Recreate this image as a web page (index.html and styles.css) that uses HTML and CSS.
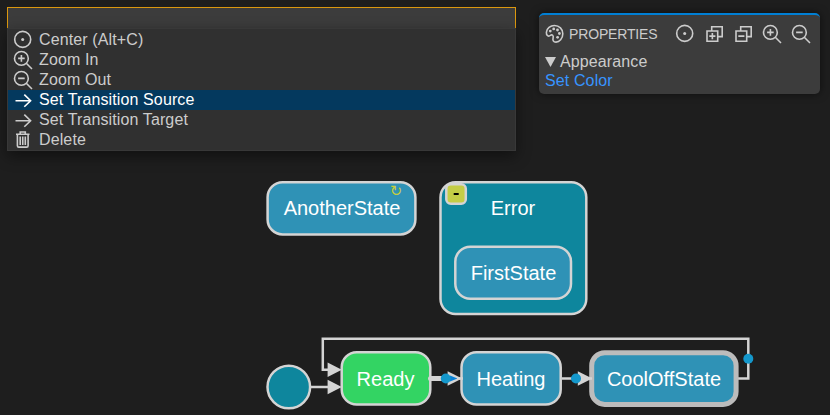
FILE: index.html
```html
<!DOCTYPE html>
<html lang="en">
<head>
<meta charset="utf-8">
<title>State Diagram</title>
<link rel="stylesheet" href="styles.css">
</head>
<body>
<svg class="symbols" aria-hidden="true">
  <symbol id="center" viewBox="0 0 20 20"><circle cx="9.7" cy="9.4" r="8"/><circle class="solid" cx="9.7" cy="9.4" r="1.5"/></symbol>
  <symbol id="zoom-in" viewBox="0 0 20 20"><circle cx="8.4" cy="8.4" r="6.9"/><path d="M13.3 13.3L19 19M5.1 8.4h6.6M8.4 5.1v6.6"/></symbol>
  <symbol id="zoom-out" viewBox="0 0 20 20"><circle cx="8.4" cy="8.4" r="6.9"/><path d="M13.3 13.3L19 19M5.1 8.4h6.6"/></symbol>
  <symbol id="arrow" viewBox="0 0 20 20"><path d="M2.5 10.7h15M11.3 4.6l6.3 6.1-6.3 6.1"/></symbol>
  <symbol id="trash" viewBox="0 0 20 20"><path d="M3 4.3h13.5M7.2 4V2h5.1v2M4.4 4.5v11.2q0 1.4 1.4 1.4h7.9q1.4 0 1.4-1.4V4.5M7.2 6.5v8.5M9.75 6.5v8.5M12.3 6.5v8.5"/></symbol>
  <symbol id="expand" viewBox="0 0 20 20"><path d="M7.7 6.6V2.8h10.5v9.8h-4M3 7h10.7v10.3H3zM5.3 12.1h6.1M8.35 9v6.2"/></symbol>
  <symbol id="collapse" viewBox="0 0 20 20"><path d="M7.7 6.6V2.8h10.5v9.8h-4M3 7h10.7v10.3H3zM5.3 12.1h6.1"/></symbol>
  <symbol id="palette" viewBox="0 0 20 20"><path d="M1.4 8.3C1.7 4.2 5.4 1.5 9.5 1.5c4.8 0 8.300 3.700 8.300 8.200 0 5-3.500 8.400-6.800 8.400-2.700 0-3.500-1.900-2.900-4.100.7-2.500-1-4-2.800-2.500-1.700 1.400-4.200.2-3.900-3.200z"/><circle class="solid" cx="5.300" cy="7.100" r="1.400"/><circle class="solid" cx="8.700" cy="4.900" r="1.400"/><circle class="solid" cx="12.500" cy="6" r="1.400"/><circle class="solid" cx="14.400" cy="9.500" r="1.400"/><circle class="solid" cx="12.600" cy="13.300" r="1.400"/></symbol>
</svg>

<svg class="diagram" width="830" height="415" viewBox="0 0 830 415">
  <rect class="node" x="267.6" y="182.2" width="147.8" height="52.2" rx="15"/>
  <text class="label" x="342" y="215">AnotherState</text>
  <text class="loop" x="396" y="195.5">↻</text>

  <rect class="node parent" x="440.5" y="182.2" width="145.8" height="131.8" rx="15"/>
  <text class="label" x="513" y="215">Error</text>
  <rect class="toggle" x="446.3" y="184.3" width="19.5" height="19.5" rx="4.5"/>
  <path class="minus" d="M453.7 194h5"/>
  <rect class="node" x="455.3" y="246.7" width="115.7" height="52.1" rx="15"/>
  <text class="label" x="513.5" y="280">FirstState</text>

  <path class="edge" d="M736 378.6H748.3V338.8H322.8V369.8H329M311 387H329"/>
  <circle class="node parent" cx="288.8" cy="387" r="21.3"/>
  <rect class="node ready" x="341.7" y="352.3" width="88.6" height="52.2" rx="15"/>
  <text class="label" x="385.5" y="386">Ready</text>
  <path class="head" d="M327.6 362.6v14.4l14.2-7.2zM327.6 379.8v14.4l14.2-7.2z"/>
  <rect class="node" x="461.5" y="352.3" width="99.2" height="52.2" rx="15"/>
  <text class="label" x="511" y="386">Heating</text>
  <rect class="node selected" x="591.7" y="352.7" width="144.4" height="51.7" rx="13"/>
  <text class="label" x="664" y="386">CoolOffState</text>

  <path class="thick" d="M430.5 378.5H446"/>
  <path class="head" d="M447.6 371.3l14.5 7.2-14.5 7.2v-3.3l4-3.9-4-3.9z"/>
  <path class="core" d="M450 375.4l7.5 3.1-7.5 3.1z"/>
  <path class="edge" d="M457 378.5h6"/>
  <path class="edge" d="M562 378.5h10M585 378.5h7"/>
  <path class="head" d="M577.8 371.3l14.5 7.2-14.5 7.2v-3.3l3-3.9-3-3.9z"/>
  <circle class="handle" cx="445.8" cy="378.5" r="5"/>
  <circle class="handle" cx="576" cy="378.5" r="5"/>
  <circle class="handle" cx="748.3" cy="358.7" r="5"/>
</svg>

<main class="overlay">
  <section class="palette">
    <input class="search" type="text" aria-label="Command">
    <div class="menu">
      <div class="item"><svg class="icon"><use href="#center"/></svg>Center (Alt+C)</div>
      <div class="item"><svg class="icon"><use href="#zoom-in"/></svg>Zoom In</div>
      <div class="item"><svg class="icon"><use href="#zoom-out"/></svg>Zoom Out</div>
      <div class="item active"><svg class="icon"><use href="#arrow"/></svg>Set Transition Source</div>
      <div class="item"><svg class="icon"><use href="#arrow"/></svg>Set Transition Target</div>
      <div class="item"><svg class="icon"><use href="#trash"/></svg>Delete</div>
    </div>
  </section>
  <aside class="panel">
    <header class="panel-head">
      <svg class="icon"><use href="#palette"/></svg>
      <span class="title">PROPERTIES</span>
      <div class="tools">
        <svg class="icon"><use href="#center"/></svg>
        <svg class="icon"><use href="#expand"/></svg>
        <svg class="icon"><use href="#collapse"/></svg>
        <svg class="icon"><use href="#zoom-in"/></svg>
        <svg class="icon"><use href="#zoom-out"/></svg>
      </div>
    </header>
    <div class="group"><svg class="caret" viewBox="0 0 11 10"><path d="M0 0h11L5.500 10z"/></svg>Appearance</div>
    <div class="link">Set Color</div>
  </aside>
</main>
</body>
</html>
```
FILE: styles.css
```css
* { box-sizing: border-box; }
body {
  margin: 0;
  width: 830px;
  height: 415px;
  overflow: hidden;
  position: relative;
  background: #1e1e1e;
  color: #ccc;
  font: 16px/20px "Liberation Sans", Arial, sans-serif;
  letter-spacing: .12px;
}
.symbols { position: absolute; width: 0; height: 0; }
.diagram { position: absolute; left: 0; top: 0; letter-spacing: 0; }

.node { fill: #2f92b6; stroke: #d4d4d4; stroke-width: 2.5; }
.parent { fill: #0e869d; }
.ready { fill: #33d463; }
.selected { stroke: #bcbcbc; stroke-width: 5; }
.label { fill: #fff; font-size: 20px; text-anchor: middle; }
.loop { fill: #c5cc41; font: 15px "DejaVu Sans", sans-serif; text-anchor: middle; }
.toggle { fill: #c4cd46; stroke: #d4d4d4; stroke-width: 2.5; }
.minus { stroke: #000; stroke-width: 2; }
.edge { fill: none; stroke: #d4d4d4; stroke-width: 2.5; }
.thick { stroke: #d4d4d4; stroke-width: 5; stroke-linecap: round; }
.head { fill: #d4d4d4; }
.core { fill: #0b82d8; }
.handle { fill: #1497cb; }

.overlay {
  position: relative;
  display: flex;
  justify-content: space-between;
  align-items: flex-start;
  padding: 7px 10px 0 7px;
}
.palette { width: 509px; }
.search {
  display: block;
  width: 100%;
  height: 21px;
  margin: 0;
  padding: 0 6px;
  background: #3c3c3c;
  border: 1px solid #dc980f;
  border-bottom: 0;
  border-radius: 0;
  outline: none;
  color: #ccc;
}
.menu {
  height: 123px;
  padding-top: 1px;
  background: #303030;
  border: 1px solid #383838;
  box-shadow: 0 5px 14px rgba(0, 0, 0, .45);
}
.item {
  display: flex;
  gap: 6px;
  height: 20px;
  padding-left: 5px;
  line-height: 19px;
}
.active { background: #04395e; color: #fff; }
.icon {
  width: 20px;
  height: 20px;
  flex: none;
  fill: none;
  stroke: currentColor;
  stroke-width: 1.6;
}
.solid { fill: currentColor; stroke: none; }

.panel {
  width: 281px;
  height: 81px;
  margin-top: 6px;
  padding: 10px 9.5px 0 6px;
  background: #3c3c3c;
  border-top: 2px solid #007fd4;
  border-radius: 5px;
  box-shadow: 0 0 8px rgba(0, 0, 0, .55);
}
.panel-head { display: flex; align-items: center; height: 18px; }
.title { font-size: 14px; line-height: 18px; letter-spacing: -.15px; margin-left: 4px; }
.tools { display: flex; gap: 9px; margin-left: auto; }
.group { display: flex; align-items: center; gap: 4px; height: 20px; margin-top: 9px; }
.caret { width: 11px; height: 10px; fill: currentColor; }
.link { color: #3794ff; line-height: 18px; }
```
